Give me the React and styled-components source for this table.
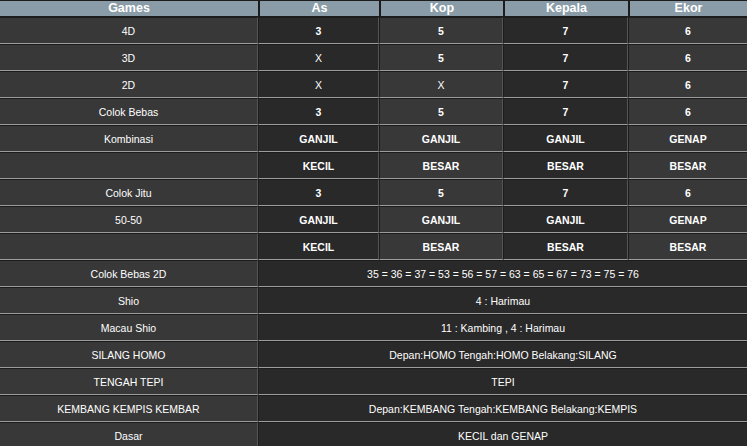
import React from "react";
import styled, { createGlobalStyle } from "styled-components";

const GlobalStyle = createGlobalStyle`
  html, body {
    margin: 0;
    padding: 0;
    background: #1e1e1e;
    font-family: "Liberation Sans", Arial, sans-serif;
  }
`;

const Table = styled.table`
  width: 747px;
  table-layout: fixed;
  border-collapse: separate;
  border-spacing: 0;
  background: #1c1c1c;
  color: #ffffff;
`;

const HeadCell = styled.th`
  height: 15px;
  padding: 0;
  background: #8a9ca7;
  color: #ffffff;
  font-size: 12.5px;
  font-weight: 700;
  text-align: center;
  line-height: 15px;
  border-top: 1px solid #1c1c1c;
  border-bottom: 1px solid #1c1c1c;
  & + & {
    border-left: 2px solid #1c1c1c;
  }
`;

const Cell = styled.td`
  height: 25px;
  padding: 0;
  text-align: center;
  vertical-align: middle;
  font-size: 10.5px;
  font-weight: ${({ $bold }) => ($bold ? 700 : 400)};
  background: ${({ $dark }) => ($dark ? "#292929" : "#383838")};
  border-top: 1px solid #1c1c1c;
  border-bottom: 1px solid #9c9c9c;
  border-right: 1px solid #555555;
  & + & {
    border-left: 1px solid #1c1c1c;
  }
  &:last-child {
    border-right: none;
  }
`;

const cols = ["Games", "As", "Kop", "Kepala", "Ekor"];
const widths = [258, 121, 124, 125, 119];

const gridRows = [
  ["4D", "3", "5", "7", "6"],
  ["3D", "X", "5", "7", "6"],
  ["2D", "X", "X", "7", "6"],
  ["Colok Bebas", "3", "5", "7", "6"],
  ["Kombinasi", "GANJIL", "GANJIL", "GANJIL", "GENAP"],
  ["", "KECIL", "BESAR", "BESAR", "BESAR"],
  ["Colok Jitu", "3", "5", "7", "6"],
  ["50-50", "GANJIL", "GANJIL", "GANJIL", "GENAP"],
  ["", "KECIL", "BESAR", "BESAR", "BESAR"],
];

const wideRows = [
  ["Colok Bebas 2D", "35 = 36 = 37 = 53 = 56 = 57 = 63 = 65 = 67 = 73 = 75 = 76"],
  ["Shio", "4 : Harimau"],
  ["Macau Shio", "11 : Kambing , 4 : Harimau"],
  ["SILANG HOMO", "Depan:HOMO Tengah:HOMO Belakang:SILANG"],
  ["TENGAH TEPI", "TEPI"],
  ["KEMBANG KEMPIS KEMBAR", "Depan:KEMBANG Tengah:KEMBANG Belakang:KEMPIS"],
  ["Dasar", "KECIL dan GENAP"],
];

export default function App() {
  return (
    <>
      <GlobalStyle />
      <Table>
        <colgroup>
          {widths.map((w, i) => (
            <col key={i} style={{ width: w }} />
          ))}
        </colgroup>
        <thead>
          <tr>
            {cols.map((c) => (
              <HeadCell key={c}>{c}</HeadCell>
            ))}
          </tr>
        </thead>
        <tbody>
          {gridRows.map((r, i) => (
            <tr key={i}>
              <Cell>{r[0]}</Cell>
              {r.slice(1).map((v, j) => (
                <Cell key={j} $bold={v !== "X"} $dark={j % 2 === 0}>
                  {v}
                </Cell>
              ))}
            </tr>
          ))}
          {wideRows.map(([label, value]) => (
            <tr key={label}>
              <Cell>{label}</Cell>
              <Cell colSpan={4} $dark>
                {value}
              </Cell>
            </tr>
          ))}
        </tbody>
      </Table>
    </>
  );
}
